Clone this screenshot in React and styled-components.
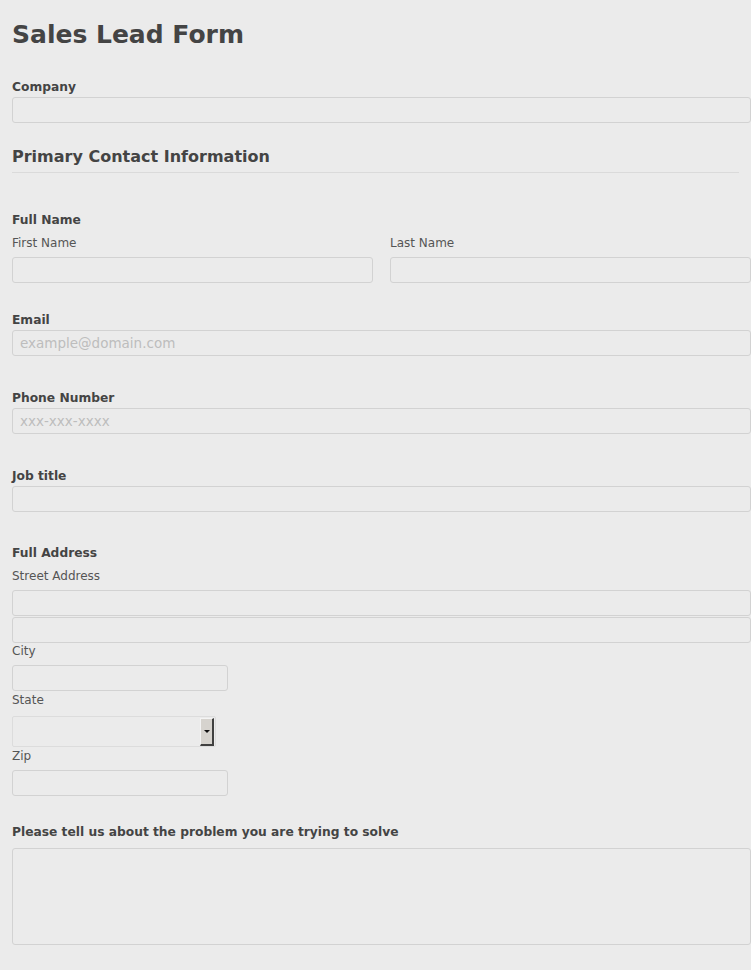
import React from 'react'
import styled, { createGlobalStyle } from 'styled-components'

const Global = createGlobalStyle`
  html, body {
    margin: 0;
    padding: 0;
    background: #ebebeb;
  }
  body {
    font-family: "DejaVu Sans", Verdana, sans-serif;
    color: #444;
  }
`

const Page = styled.form`
  padding: 20px 0 30px 12px;
  min-height: 970px;
  box-sizing: border-box;
`

const Title = styled.h1`
  margin: 0;
  font-size: 25px;
  line-height: 30px;
  font-weight: bold;
  color: #444;
`

const SectionHeading = styled.h2`
  margin: 24px 12px 0 0;
  padding-bottom: 5px;
  font-size: 16px;
  line-height: 20px;
  font-weight: bold;
  color: #444;
  border-bottom: 1px solid #dadada;
`

const Field = styled.div`
  margin-top: ${p => p.$top}px;
`

const Label = styled.label`
  display: block;
  font-size: 12.25px;
  line-height: 16px;
  font-weight: bold;
  color: #444;
  margin-bottom: ${p => (p.$gap != null ? p.$gap : 2)}px;
`

const SubLabel = styled.label`
  display: block;
  font-size: 12px;
  line-height: 16px;
  color: #555;
  margin-top: ${p => p.$top || 0}px;
  margin-bottom: ${p => (p.$gap != null ? p.$gap : 6)}px;
`

const Input = styled.input`
  display: block;
  box-sizing: border-box;
  width: ${p => p.$width || '100%'};
  height: 26px;
  margin: ${p => p.$stacked ? '1px 0 0' : '0'};
  padding: 0 7px;
  border: 1px solid #d2d2d2;
  border-radius: 3px;
  background: #ebebeb;
  font-family: "DejaVu Sans", Verdana, sans-serif;
  font-size: 13.5px;
  color: #444;
  outline: none;

  &::placeholder {
    color: #bdbdbd;
  }
`

const NameRow = styled.div`
  display: grid;
  grid-template-columns: 361px 361px;
  column-gap: 17px;
  margin-top: 7px;
`

const SelectBox = styled.div`
  display: flex;
  align-items: center;
  box-sizing: border-box;
  width: 204px;
  height: 31px;
  padding: 1px 1px 1px 0;
  border: 1px solid #dcdcdc;
  border-radius: 2px;
  background: #ebebeb;
`

const Select = styled.select`
  flex: 1;
  height: 100%;
  min-width: 0;
  border: none;
  background: transparent;
  appearance: none;
  font-family: "DejaVu Sans", Verdana, sans-serif;
  font-size: 13px;
  outline: none;
`

const ArrowButton = styled.span`
  display: flex;
  align-items: center;
  justify-content: center;
  box-sizing: border-box;
  width: 14px;
  height: 28px;
  background: #d6d3ce;
  border-top: 1px solid #f4f4f4;
  border-left: 1px solid #f4f4f4;
  border-right: 2px solid #404040;
  border-bottom: 2px solid #404040;

  &::after {
    content: "";
    border-left: 3px solid transparent;
    border-right: 3px solid transparent;
    border-top: 3px solid #111;
  }
`

const TextArea = styled.textarea`
  display: block;
  box-sizing: border-box;
  width: 100%;
  height: 97px;
  margin: 0;
  padding: 6px 7px;
  border: 1px solid #d2d2d2;
  border-radius: 3px;
  background: #ebebeb;
  resize: none;
  font-family: "DejaVu Sans", Verdana, sans-serif;
  font-size: 13px;
  outline: none;
`

export default function App() {
  return (
    <>
      <Global />
      <Page onSubmit={e => e.preventDefault()}>
        <Title>Sales Lead Form</Title>

        <Field $top={29}>
          <Label>Company</Label>
          <Input type="text" />
        </Field>

        <SectionHeading>Primary Contact Information</SectionHeading>

        <Field $top={39}>
          <Label $gap={0}>Full Name</Label>
          <NameRow>
            <div>
              <SubLabel>First Name</SubLabel>
              <Input type="text" />
            </div>
            <div>
              <SubLabel>Last Name</SubLabel>
              <Input type="text" />
            </div>
          </NameRow>
        </Field>

        <Field $top={29}>
          <Label>Email</Label>
          <Input type="email" placeholder="example@domain.com" />
        </Field>

        <Field $top={34}>
          <Label>Phone Number</Label>
          <Input type="tel" placeholder="xxx-xxx-xxxx" />
        </Field>

        <Field $top={34}>
          <Label>Job title</Label>
          <Input type="text" />
        </Field>

        <Field $top={33}>
          <Label $gap={0}>Full Address</Label>
          <SubLabel $top={7}>Street Address</SubLabel>
          <Input type="text" />
          <Input type="text" $stacked />
          <SubLabel $gap={6}>City</SubLabel>
          <Input type="text" $width="216px" />
          <SubLabel $top={1} $gap={8}>State</SubLabel>
          <SelectBox>
            <Select defaultValue="">
              <option value=""></option>
            </Select>
            <ArrowButton />
          </SelectBox>
          <SubLabel $top={1} $gap={6}>Zip</SubLabel>
          <Input type="text" $width="216px" />
        </Field>

        <Field $top={28}>
          <Label $gap={8}>Please tell us about the problem you are trying to solve</Label>
          <TextArea />
        </Field>
      </Page>
    </>
  )
}
